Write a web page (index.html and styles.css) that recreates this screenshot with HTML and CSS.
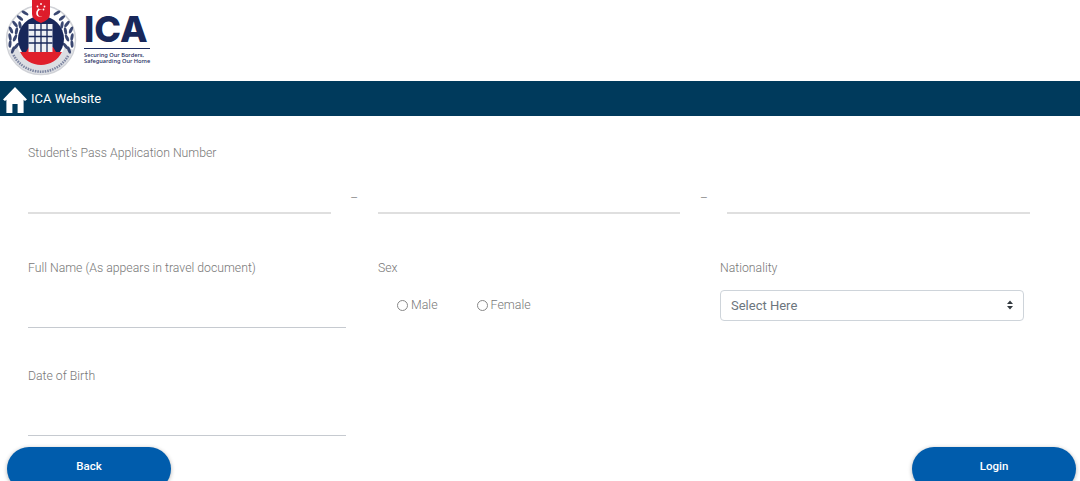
FILE: index.html
```html
<!DOCTYPE html>
<html lang="en">
<head>
<meta charset="utf-8">
<title>ICA</title>
<link rel="stylesheet" href="styles.css">
</head>
<body>
<header class="brand">
  <svg class="crest" viewBox="0 0 72 76" width="72" height="76" aria-hidden="true">
    <defs>
      <g id="leaf"><ellipse cx="0" cy="0" rx="3.800" ry="1.500" fill="#3a4771"/></g>
      <g id="laurel">
        <use href="#leaf" transform="translate(8 50) rotate(-70)"/>
        <use href="#leaf" transform="translate(5 44) rotate(-85)"/>
        <use href="#leaf" transform="translate(5 37) rotate(-100)"/>
        <use href="#leaf" transform="translate(6 30) rotate(-115)"/>
        <use href="#leaf" transform="translate(10 24) rotate(-130)"/>
        <use href="#leaf" transform="translate(15 18) rotate(-140)"/>
        <use href="#leaf" transform="translate(20 13) rotate(-150)"/>
        <use href="#leaf" transform="translate(11.500 46) rotate(-50)"/>
        <use href="#leaf" transform="translate(10 38) rotate(-65)"/>
        <use href="#leaf" transform="translate(11.500 31) rotate(-80)"/>
        <use href="#leaf" transform="translate(15 25) rotate(-100)"/>
      </g>
    </defs>
    <circle cx="36" cy="40" r="34.500" fill="#fff" stroke="#d0d2d7" stroke-width="1.500"/>
    <path d="M3.500 50 A34 34 0 0 0 68.500 50 L60 46 A25 25 0 0 1 12 46 Z" fill="#dcdee3"/>
    <use href="#laurel"/>
    <use href="#laurel" transform="translate(72 0) scale(-1 1)"/>
    <circle cx="36" cy="39" r="23" fill="#18275a"/>
    <path d="M15 52 H21 L24 47 H48 L51 52 H57 C53 60 45 65 36 65 C27 65 19 60 15 52 Z" fill="#e01f2b"/>
    <path d="M8.500 55 A31 31 0 0 0 63.500 55" fill="none" stroke="#7b84a0" stroke-width="2.500" stroke-dasharray="1.500 1"/>
    <rect x="23.500" y="24" width="24" height="28" fill="#eef0f4"/>
    <g fill="none" stroke="#18275a" stroke-width="1.300">
      <path d="M30 24V52M36 24V52M42 24V52M23.500 30H47.500M23.500 36.500H47.500M23.500 43H47.500"/>
    </g>
    <path d="M27 0H45V14Q45 20 36 23Q27 20 27 14Z" fill="#dd1c2b"/>
    <circle cx="35" cy="13" r="3.800" fill="#fff"/>
    <circle cx="36.500" cy="13" r="3.600" fill="#dd1c2b"/>
    <g fill="#fff">
      <circle cx="36" cy="4" r=".9"/><circle cx="32.500" cy="6.500" r=".9"/><circle cx="39.500" cy="6.500" r=".9"/><circle cx="33.500" cy="9.500" r=".9"/><circle cx="38.500" cy="9.500" r=".9"/>
    </g>
  </svg>
  <div class="wordmark">
    <div class="ica">ICA</div>
    <div class="motto">Securing Our Borders,<br>Safeguarding Our Home</div>
  </div>
</header>
<nav class="topbar">
  <svg class="home" viewBox="0 0 24 26" width="24" height="26" aria-hidden="true">
    <path d="M12 0 L24 12.400 L22 14 L20.600 12.800 V26 H14.600 V17 H9.400 V26 H3.400 V12.800 L2 14 L0 12.400 Z" fill="#fff"/>
  </svg>
  <span>ICA Website</span>
</nav>
<main class="form">
  <section class="app-number">
    <label class="label">Student's Pass Application Number</label>
    <div class="number-row">
      <div class="line-input soft"></div>
      <span class="dash">–</span>
      <div class="line-input soft"></div>
      <span class="dash">–</span>
      <div class="line-input soft"></div>
    </div>
  </section>
  <section class="person">
    <div class="col-name">
      <label class="label">Full Name (As appears in travel document)</label>
      <div class="line-input"></div>
    </div>
    <div class="col-sex">
      <label class="label">Sex</label>
      <div class="radios">
        <span class="radio"><i class="dot"></i>Male</span>
        <span class="radio"><i class="dot"></i>Female</span>
      </div>
    </div>
    <div class="col-nat">
      <label class="label">Nationality</label>
      <div class="select">
        <span>Select Here</span>
        <svg viewBox="0 0 8 10" width="8" height="10" aria-hidden="true"><path d="M4 0.500L7 4H1ZM4 9.500L1 6H7Z" fill="#343a40"/></svg>
      </div>
    </div>
  </section>
  <section class="dob">
    <label class="label">Date of Birth</label>
    <div class="line-input"></div>
  </section>
</main>
<footer class="actions">
  <div class="btn">Back</div>
  <div class="btn">Login</div>
</footer>
</body>
</html>
```
FILE: styles.css
```css
* { box-sizing: border-box; }
html, body { margin: 0; height: 481px; overflow: hidden; background: #fff; }
body { font-family: Roboto, "Liberation Sans", sans-serif; color: #777; font-weight: 300; position: relative; }

.brand { height: 81px; display: flex; align-items: flex-start; padding-left: 5px; }
.crest { display: block; flex: none; }
.wordmark { margin-left: 7px; padding-top: 9px; width: 66px; }
.ica { font-family: Inter, "Liberation Sans", sans-serif; font-weight: 800; font-size: 36px; line-height: 40px; height: 40px; color: #18275a; border-bottom: 1px solid #18275a; white-space: nowrap; }
.motto { font-family: "Noto Sans", sans-serif; font-weight: 500; font-size: 5.7px; line-height: 6px; color: #18275a; margin-top: 3px; white-space: nowrap; }

.topbar { height: 35px; background: #003a5c; color: #fff; display: flex; align-items: center; padding-left: 3px; font-size: 13px; font-weight: 400; }
.home { margin-right: 4px; margin-top: 2px; }

.form { padding: 0 28px; }
.label { display: block; font-size: 12.25px; line-height: 16px; color: #777; }
.line-input { border-bottom: 1px solid #c6cad0; }
.line-input.soft { border-bottom: 2px solid #dfdfdf; }

.app-number { padding-top: 29px; }
.number-row { display: flex; align-items: flex-end; margin-top: 21px; width: 1002px; }
.number-row .line-input { width: 303px; height: 32px; }
.dash { width: 47px; text-align: center; font-size: 12px; line-height: 14px; padding-bottom: 9px; }

.person { display: flex; margin-top: 46px; }
.col-name { width: 318px; }
.col-name .line-input { height: 52px; }
.col-sex { margin-left: 32px; width: 342px; }
.col-nat { width: 304px; }
.radios { display: flex; gap: 39px; padding-left: 19px; margin-top: 21px; }
.radio { display: flex; align-items: center; font-size: 12.4px; line-height: 16px; }
.dot { width: 11px; height: 11px; border: 1px solid #888; border-radius: 50%; margin-right: 3px; }
.select { margin-top: 14px; height: 31px; border: 1px solid #ced4da; border-radius: 4px; display: flex; align-items: center; justify-content: space-between; padding: 0 9px 1px 10px; font-size: 13px; font-weight: 400; color: #6c757d; }

.dob { margin-top: 40px; width: 318px; }
.dob .line-input { height: 52px; }

.actions { position: absolute; left: 7px; right: 4px; top: 447px; display: flex; justify-content: space-between; }
.btn { width: 164px; height: 44px; background: #005cac; border-radius: 22px; color: #fff; font-size: 11.5px; font-weight: 500; text-align: center; line-height: 39px; box-shadow: 0 1px 4px rgba(0,0,0,.3); }
```
